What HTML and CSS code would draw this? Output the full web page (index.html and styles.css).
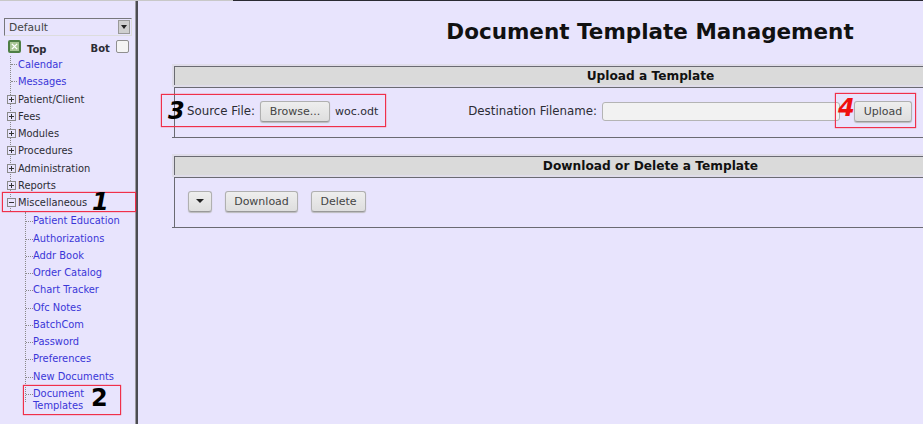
FILE: index.html
```html
<!DOCTYPE html>
<html lang="en">
<head>
  <meta charset="UTF-8" />
  <title>Document Template Management</title>
  <link rel="stylesheet" href="styles.css">
</head>
<body>

<div class="topline"></div>

<div class="app">
  <div class="sidebar">
    <div class="fake-select">
      <span>Default</span>
      <span class="select-btn"><i class="arrow"></i></span>
    </div>
    <div class="top-bot">
      <span class="check checked">
        <svg width="7" height="7" viewBox="0 0 8 8"><path d="M1 1L7 7M7 1L1 7" stroke="#fff" stroke-width="1.6"/></svg>
      </span>
      <b class="top-label">Top</b>
      <b class="bot-label">Bot</b>
      <span class="check"></span>
    </div>

    <ul class="tree">
      <li class="link"><a>Calendar</a></li>
      <li class="link"><a>Messages</a></li>
      <li><span class="toggle plus"></span>Patient/Client</li>
      <li><span class="toggle plus"></span>Fees</li>
      <li><span class="toggle plus"></span>Modules</li>
      <li><span class="toggle plus"></span>Procedures</li>
      <li><span class="toggle plus"></span>Administration</li>
      <li><span class="toggle plus"></span>Reports</li>
      <li><span class="toggle"></span>Miscellaneous</li>
    </ul>
    <ul class="subtree">
      <li><a>Patient Education</a></li>
      <li><a>Authorizations</a></li>
      <li><a>Addr Book</a></li>
      <li><a>Order Catalog</a></li>
      <li><a>Chart Tracker</a></li>
      <li><a>Ofc Notes</a></li>
      <li><a>BatchCom</a></li>
      <li><a>Password</a></li>
      <li><a>Preferences</a></li>
      <li><a>New Documents</a></li>
      <li class="two-line"><a>Document<br>Templates</a></li>
    </ul>
  </div>

  <div class="content">
    <div class="page">
      <h1>Document Template Management</h1>

      <div class="panel upload-panel">
        <div class="panel-title">Upload a Template</div>
        <div class="panel-body upload-row">
          <span>Source File:</span>
          <button class="btn browse">Browse...</button>
          <span class="file-name">woc.odt</span>
          <span class="dest-label">Destination Filename:</span>
          <span class="text-input"></span>
          <button class="btn upload">Upload</button>
        </div>
      </div>

      <div class="panel download-panel">
        <div class="panel-title">Download or Delete a Template</div>
        <div class="panel-body download-row">
          <button class="btn drop"><i class="arrow"></i></button>
          <button class="btn download">Download</button>
          <button class="btn delete">Delete</button>
        </div>
      </div>
    </div>
  </div>
</div>

<!-- callouts drawn over the screenshot -->
<div class="callout box-1"></div>
<div class="callout box-2"></div>
<div class="callout box-3"></div>
<div class="callout box-4"></div>
<div class="mark mark-1">1</div>
<div class="mark mark-2">2</div>
<div class="mark mark-3">3</div>
<div class="mark mark-4">4</div>

</body>
</html>
```

FILE: styles.css
```css
:root {
  --bg: #e8e4fd;
  --link: #3a36d8;
  --text: #2c2c34;
  --bar: #dadada;
  --rule: #6a6a72;
  --pale: #dfdce9;
  --red: #f0304a;
}
* {
  margin: 0;
  padding: 0;
  box-sizing: border-box;
}
html, body {
  height: 424px;
  overflow: hidden;
}
body {
  background: var(--bg);
  color: var(--text);
  font-family: "DejaVu Sans", sans-serif;
  font-size: 10px;
  position: relative;
}
.topline {
  height: 1px;
  background: linear-gradient(to right, #c8c8c8 233px, #2a2a32 233px);
}
.app {
  display: flex;
  height: 423px;
}

/* left nav */
.sidebar {
  width: 138px;
  flex: none;
  padding: 17px 0 0 4px;
  border-right: 2px solid #4c4c52;
  box-shadow: inset -1px 0 0 #9a9a9f;
}
.fake-select {
  width: 128px;
  height: 18px;
  display: flex;
  justify-content: space-between;
  align-items: center;
  padding-left: 4px;
  border: 1px solid #77777c;
  border-right-color: #ddd;
  border-bottom-color: #ddd;
  font-size: 10.7px;
  color: #444;
}
.select-btn {
  width: 12px;
  height: 14px;
  margin-right: 1px;
  background: #cfcfcf;
  border: 1px solid #999;
  display: flex;
  align-items: center;
  justify-content: center;
}
.arrow {
  display: block;
  width: 0;
  height: 0;
  border-left: 4px solid transparent;
  border-right: 4px solid transparent;
  border-top: 4px solid #222;
}
.select-btn .arrow {
  border-left-width: 3px;
  border-right-width: 3px;
}
.top-bot {
  display: flex;
  align-items: flex-start;
  height: 17px;
  margin-top: 4px;
  padding-left: 4px;
}
.check {
  width: 13px;
  height: 13px;
  border: 1px solid #8f8f8f;
  border-radius: 2px;
  background: #f4f4f4;
}
.check.checked {
  background: #a9c795;
  border: 2px solid #4f7f45;
  display: flex;
  align-items: center;
  justify-content: center;
}
.top-label {
  margin-left: 6px;
  margin-top: 4px;
}
.bot-label {
  margin-left: 44px;
  margin-right: 6px;
  margin-top: 3px;
}

.tree, .subtree {
  list-style: none;
  font-size: 9.9px;
}
.tree {
  margin: -1px 0 0 6px;
  border-left: 1px dotted #8a8a8a;
}
.tree li {
  height: 17.25px;
  line-height: 17px;
  padding-left: 7px;
  display: flex;
  align-items: center;
}
.tree li.link::before {
  content: "";
  width: 6px;
  border-top: 1px dotted #8a8a8a;
  margin-left: -7px;
  margin-right: 1px;
}
.tree a, .subtree a {
  color: var(--link);
}
.toggle {
  width: 9px;
  height: 9px;
  border: 1px solid #8a8a8a;
  background: var(--bg) linear-gradient(#333, #333) center / 5px 1px no-repeat;
  margin-left: -11px;
  margin-right: 2px;
  flex: none;
}
.toggle.plus {
  background:
    linear-gradient(#333, #333) center / 5px 1px no-repeat,
    linear-gradient(#333, #333) center / 1px 5px no-repeat,
    var(--bg);
}
.subtree {
  margin: 1px 0 0 21px;
  border-left: 1px dotted #8a8a8a;
}
.subtree li {
  height: 17.25px;
  line-height: 17px;
  padding-left: 7px;
  position: relative;
}
.subtree li::before {
  content: "";
  position: absolute;
  left: 0;
  top: 9px;
  width: 7px;
  border-top: 1px dotted #8a8a8a;
}
.subtree li.two-line {
  line-height: 12px;
  padding-top: 3px;
}

/* main area: the page runs wider than the window and is cut off on the right */
.content {
  flex: 1;
  padding: 18px 0 0 36px;
  min-width: 0;
  overflow: hidden;
}
.page {
  width: 952px;
}
h1 {
  font-size: 21.5px;
  line-height: 26px;
  color: #111;
  text-align: center;
  white-space: nowrap;
}
.upload-panel {
  margin-top: 21px;
}
.download-panel {
  margin-top: 18px;
}
.panel-title {
  height: 19px;
  background: var(--bar);
  border-top: 1px solid var(--rule);
  border-left: 1px solid var(--rule);
  box-shadow: 0 0 0 2px var(--pale);
  text-align: center;
  font-weight: bold;
  font-size: 12.2px;
  line-height: 18px;
  color: #111;
}
.panel-body {
  margin-top: 2px;
  border-top: 1px solid var(--rule);
  border-left: 1px solid var(--rule);
  border-bottom: 1px solid var(--rule);
  display: flex;
  align-items: center;
  font-size: 11.8px;
  position: relative;
}
/* bottom rule sticks out a little to the left */
.panel-body::after {
  content: "";
  position: absolute;
  left: -3px;
  bottom: -1px;
  width: 3px;
  height: 1px;
  background: var(--rule);
}
.upload-row {
  height: 51px;
  padding: 0 0 3px 12px;
}
.download-row {
  height: 51px;
  padding: 0 0 3px 13px;
  gap: 13px;
}
.btn {
  font-family: "DejaVu Sans", sans-serif;
  font-size: 11px;
  color: #444;
  height: 21px;
  padding: 0;
  background: linear-gradient(#eee, #dedede);
  border: 1px solid #b0b0b0;
  border-bottom-color: #999;
  border-radius: 3px;
  box-shadow: 0 1px 1px #bbb;
}
.browse {
  margin: 0 5px;
  width: 70px;
}
.file-name {
  font-size: 11px;
}
.dest-label {
  margin-left: 90px;
}
.drop {
  width: 24px;
  display: flex;
  align-items: center;
  justify-content: center;
}
.download {
  width: 73px;
}
.delete {
  width: 55px;
}
.text-input {
  display: block;
  width: 238px;
  height: 19px;
  margin-left: 5px;
  margin-right: 14px;
  background: #f2f2f2;
  border: 1px solid #b4b4b4;
  border-radius: 3px;
}
.upload {
  width: 58px;
}

/* red annotation boxes + numbers */
.callout {
  position: absolute;
  border: 1px solid var(--red);
  box-shadow: 0 0 1px var(--red);
}
.box-1 { left: 2px; top: 192px; width: 134px; height: 20px; }
.box-2 { left: 23px; top: 385px; width: 98px; height: 30px; }
.box-3 { left: 161px; top: 94px; width: 225px; height: 33px; }
.box-4 { left: 835px; top: 93px; width: 81px; height: 35px; }
.mark {
  position: absolute;
  font-family: "DejaVu Sans", sans-serif;
  font-weight: bold;
  font-style: italic;
  font-size: 24px;
  line-height: 24px;
  color: #000;
}
.mark-1 { left: 92px; top: 190px; }
.mark-2 { left: 91px; top: 386px; font-style: normal; }
.mark-3 { left: 168px; top: 99px; }
.mark-4 { left: 838px; top: 96px; color: #f01010; }
```
